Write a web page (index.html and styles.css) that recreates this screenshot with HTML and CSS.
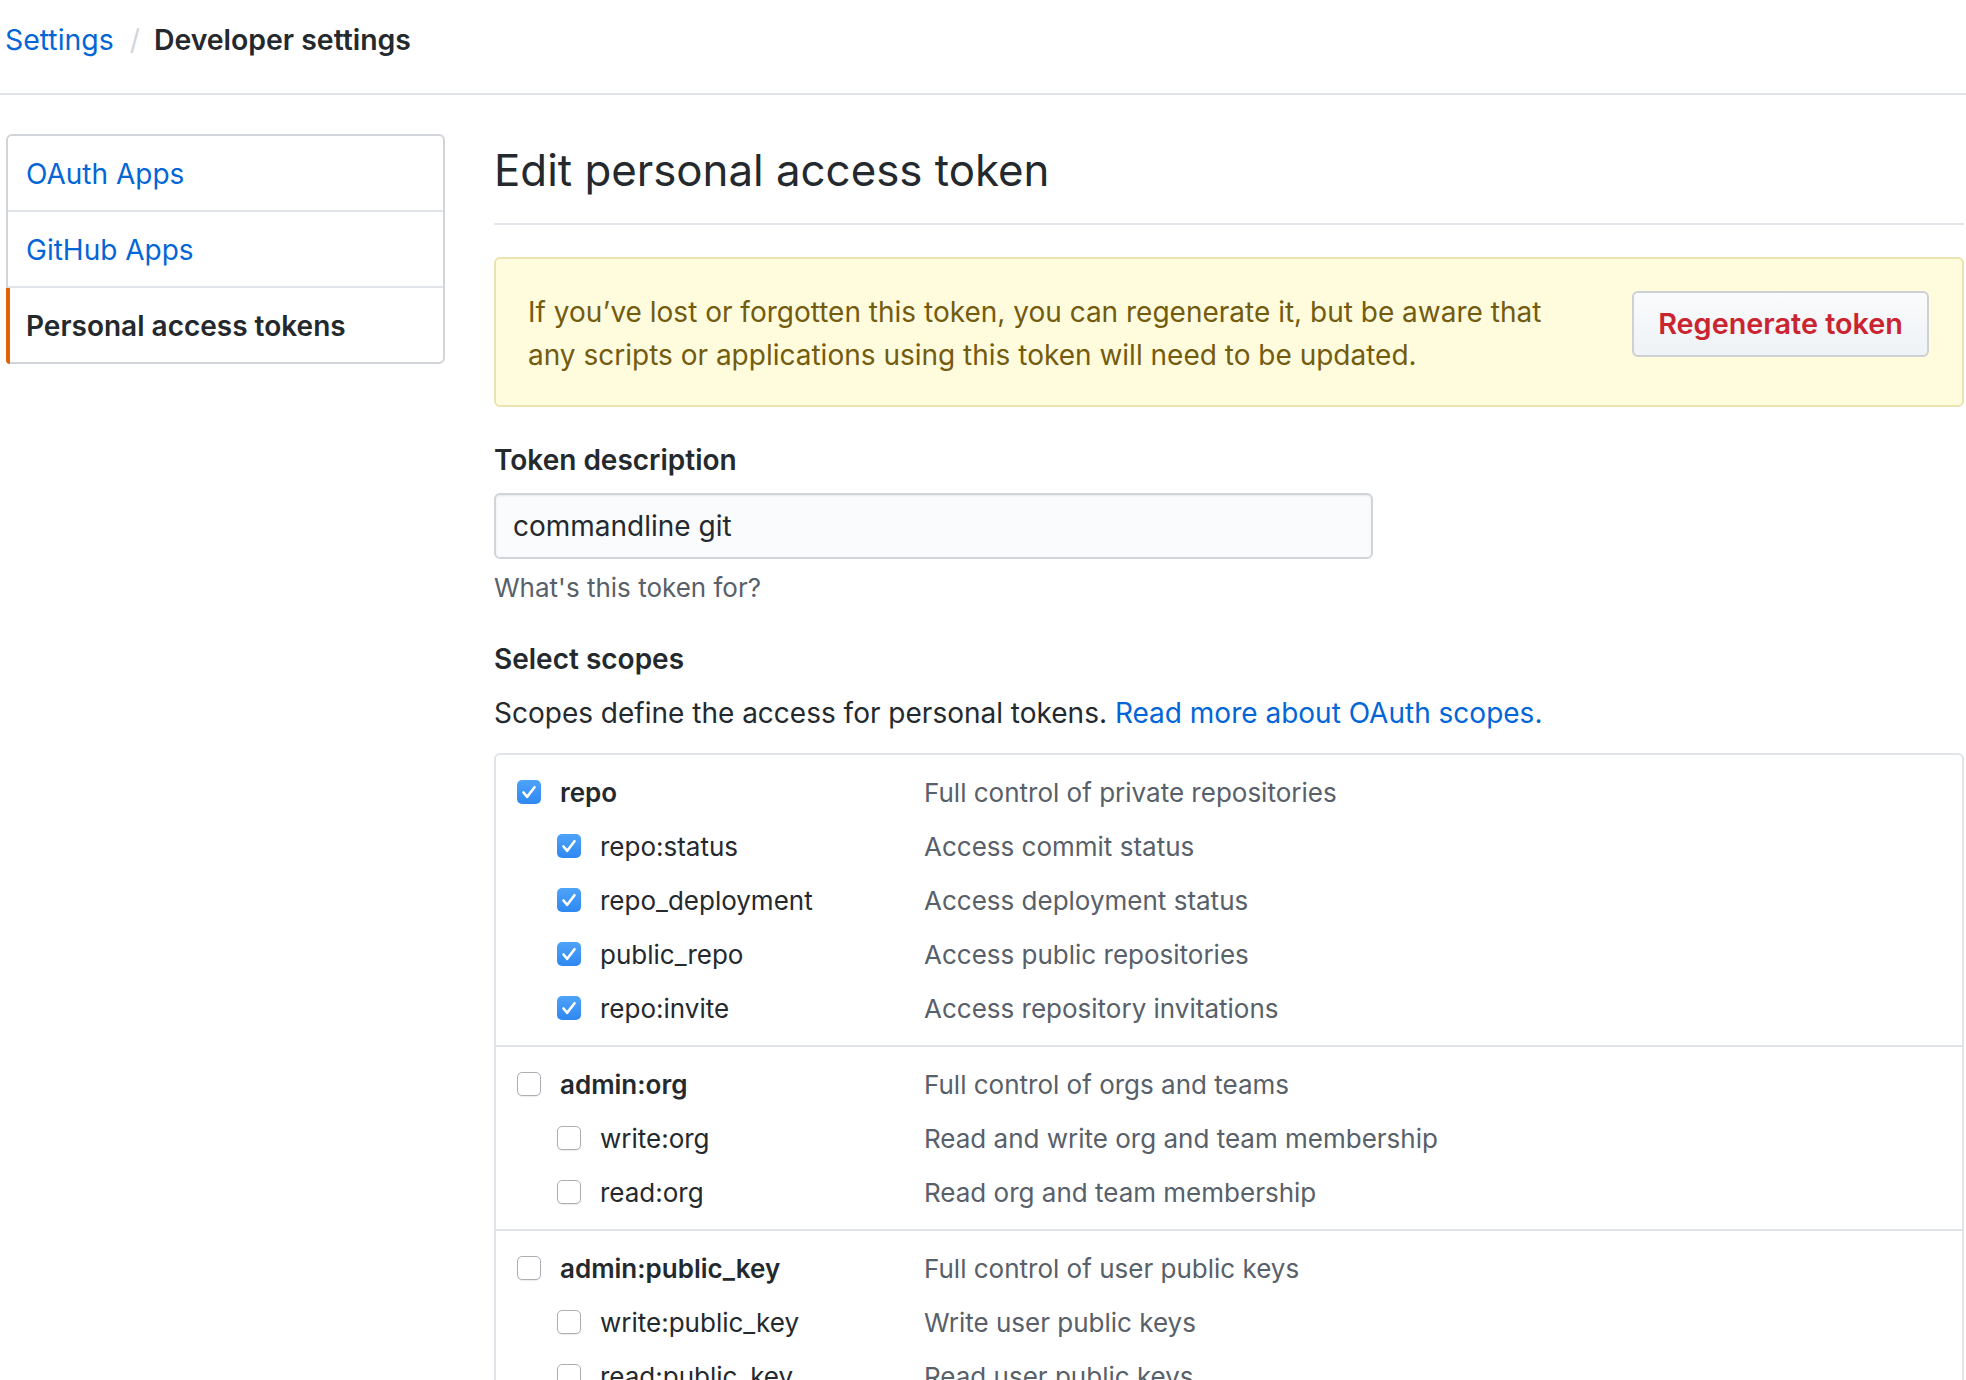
FILE: index.html
```html
<!DOCTYPE html>
<html lang="en">
<head>
<meta charset="utf-8">
<title>Edit personal access token</title>
<link rel="stylesheet" href="styles.css">
</head>
<body>
<div class="page">
  <header class="crumbs">
    <a class="crumb-link" href="#">Settings</a><span class="crumb-sep">/</span><span class="crumb-current">Developer settings</span>
  </header>

  <div class="layout">
    <nav class="menu">
      <a class="menu-item" href="#">OAuth Apps</a>
      <a class="menu-item" href="#">GitHub Apps</a>
      <a class="menu-item selected" href="#">Personal access tokens</a>
    </nav>

    <main class="main">
      <h1 class="subhead">Edit personal access token</h1>

      <div class="flash">
        <button class="btn-danger" type="button">Regenerate token</button>
        <p class="flash-text">If you’ve lost or forgotten this token, you can regenerate it, but be aware that<br>any scripts or applications using this token will need to be updated.</p>
      </div>

      <div class="form-group">
        <label class="form-label" for="desc">Token description</label>
        <input class="form-input" id="desc" type="text" value="commandline git">
        <p class="note">What's this token for?</p>
      </div>

      <h3 class="section-title">Select scopes</h3>
      <p class="section-text">Scopes define the access for personal tokens. <a class="link" href="#">Read more about OAuth scopes.</a></p>

      <div class="scopes">
        <div class="scope-group">
          <div class="scope-row parent">
            <span class="scope-name"><span class="cb checked"><svg viewBox="0 0 24 24"><polyline points="6.5,12.5 10.2,16.8 17.5,7.2"/></svg></span><b>repo</b></span>
            <span class="scope-desc">Full control of private repositories</span>
          </div>
          <div class="scope-row child">
            <span class="scope-name"><span class="cb checked"><svg viewBox="0 0 24 24"><polyline points="6.5,12.5 10.2,16.8 17.5,7.2"/></svg></span>repo:status</span>
            <span class="scope-desc">Access commit status</span>
          </div>
          <div class="scope-row child">
            <span class="scope-name"><span class="cb checked"><svg viewBox="0 0 24 24"><polyline points="6.5,12.5 10.2,16.8 17.5,7.2"/></svg></span>repo_deployment</span>
            <span class="scope-desc">Access deployment status</span>
          </div>
          <div class="scope-row child">
            <span class="scope-name"><span class="cb checked"><svg viewBox="0 0 24 24"><polyline points="6.5,12.5 10.2,16.8 17.5,7.2"/></svg></span>public_repo</span>
            <span class="scope-desc">Access public repositories</span>
          </div>
          <div class="scope-row child">
            <span class="scope-name"><span class="cb checked"><svg viewBox="0 0 24 24"><polyline points="6.5,12.5 10.2,16.8 17.5,7.2"/></svg></span>repo:invite</span>
            <span class="scope-desc">Access repository invitations</span>
          </div>
        </div>

        <div class="scope-group">
          <div class="scope-row parent">
            <span class="scope-name"><span class="cb"></span><b>admin:org</b></span>
            <span class="scope-desc">Full control of orgs and teams</span>
          </div>
          <div class="scope-row child">
            <span class="scope-name"><span class="cb"></span>write:org</span>
            <span class="scope-desc">Read and write org and team membership</span>
          </div>
          <div class="scope-row child">
            <span class="scope-name"><span class="cb"></span>read:org</span>
            <span class="scope-desc">Read org and team membership</span>
          </div>
        </div>

        <div class="scope-group">
          <div class="scope-row parent">
            <span class="scope-name"><span class="cb"></span><b>admin:public_key</b></span>
            <span class="scope-desc">Full control of user public keys</span>
          </div>
          <div class="scope-row child">
            <span class="scope-name"><span class="cb"></span>write:public_key</span>
            <span class="scope-desc">Write user public keys</span>
          </div>
          <div class="scope-row child">
            <span class="scope-name"><span class="cb"></span>read:public_key</span>
            <span class="scope-desc">Read user public keys</span>
          </div>
        </div>
      </div>
    </main>
  </div>
</div>
</body>
</html>
```

FILE: styles.css
```css
* { box-sizing: border-box; }

html, body {
  margin: 0;
  padding: 0;
  background: #ffffff;
}

body {
  font-family: Inter, "Noto Sans", "Liberation Sans", sans-serif;
  font-size: 28px;
  color: #24292e;
  overflow: hidden;
  height: 1380px;
}

a { text-decoration: none; }

.page { width: 1966px; }

/* breadcrumb header */
.crumbs {
  padding: 20px 0 33px 5px;
  font-size: 28.4px;
  line-height: 40px;
  border-bottom: 2px solid #e1e4e8;
  white-space: nowrap;
}
.crumb-link { color: #0366d6; }
.crumb-sep { color: #d1d5da; margin: 0 14px 0 16px; }
.crumb-current { font-weight: 600; color: #24292e; }

/* layout */
.layout {
  display: flex;
  align-items: flex-start;
  padding-top: 39px;
}

/* side menu */
.menu {
  width: 439px;
  margin-left: 6px;
  border: 2px solid #d1d5da;
  border-radius: 6px;
  display: flex;
  flex-direction: column;
  flex-shrink: 0;
}
.menu-item {
  position: relative;
  display: block;
  box-sizing: content-box;
  height: 74px;
  line-height: 76px;
  padding-left: 18px;
  color: #0366d6;
  border-top: 2px solid #e1e4e8;
}
.menu-item:first-child { border-top: 0; }
.menu-item.selected {
  color: #24292e;
  font-weight: 600;
}
.menu-item.selected::before {
  content: "";
  position: absolute;
  left: -2px;
  top: 0;
  bottom: -2px;
  width: 4px;
  background: #e36209;
  border-bottom-left-radius: 6px;
}

/* main */
.main {
  margin-left: 49px;
  width: 1470px;
  flex-shrink: 0;
}

.subhead {
  margin: 0;
  padding: 9px 0 24px;
  font-size: 43.8px;
  font-weight: 400;
  line-height: 56px;
  border-bottom: 2px solid #e1e4e8;
  white-space: nowrap;
}

.flash {
  margin-top: 32px;
  padding: 32px 32px 28px;
  background: #fffbdd;
  border: 2px solid #ebe2b4;
  border-radius: 6px;
  color: #735c0f;
  line-height: 43px;
}
.flash::after { content: ""; display: block; clear: both; }
.flash-text { margin: 0; white-space: nowrap; }

.btn-danger {
  float: right;
  margin-top: 0;
  margin-right: 1px;
  height: 66px;
  padding: 0 24px;
  font-family: inherit;
  font-size: 28.8px;
  font-weight: 600;
  line-height: 62px;
  color: #cb2431;
  background: linear-gradient(180deg, #fafbfc 0%, #eff3f6 90%);
  border: 2px solid #cdd0d5;
  border-radius: 6px;
  white-space: nowrap;
}

.form-group { margin-top: 32px; }
.form-label {
  display: block;
  font-weight: 600;
  line-height: 43px;
  margin-bottom: 11px;
}
.form-input {
  display: block;
  width: 879px;
  height: 66px;
  margin: 0;
  padding: 0 17px;
  font-family: inherit;
  font-size: 28px;
  color: #24292e;
  background: #fafbfc;
  border: 2px solid #d1d5da;
  border-radius: 6px;
  box-shadow: inset 0 1px 2px rgba(27, 31, 35, 0.075);
  outline: none;
}
.note {
  margin: 7px 0 0;
  font-size: 26px;
  line-height: 43px;
  color: #586069;
}

.section-title {
  margin: 29px 0 0;
  font-size: 28px;
  font-weight: 600;
  line-height: 43px;
}
.section-text {
  margin: 11px 0 0;
  line-height: 43px;
  white-space: nowrap;
}
.link { color: #0366d6; }

/* scopes table */
.scopes {
  margin-top: 18px;
  border: 2px solid #e1e4e8;
  border-radius: 6px;
  font-size: 26px;
}
.scope-group {
  padding: 10px 0;
  border-top: 2px solid #e1e4e8;
}
.scope-group:first-child { border-top: 0; }

.scope-row {
  display: flex;
  align-items: center;
  height: 54px;
  white-space: nowrap;
}
.scope-name {
  display: flex;
  align-items: center;
  width: 428px;
  flex-shrink: 0;
  gap: 19px;
}
.scope-row.parent .scope-name { padding-left: 21px; }
.scope-row.child .scope-name { padding-left: 61px; }
.scope-name b { font-weight: 600; }
.scope-desc { color: #586069; }

.cb {
  width: 24px;
  height: 24px;
  flex-shrink: 0;
  border-radius: 5px;
  background: #ffffff;
  border: 1.5px solid #abaeb3;
  box-shadow: 0 1px 1px rgba(0, 0, 0, 0.08);
  display: flex;
  align-items: center;
  justify-content: center;
}
.cb.checked {
  border: 0;
  background: linear-gradient(180deg, #4ea3f8 0%, #2f88f2 100%);
  box-shadow: none;
}
.cb svg {
  width: 24px;
  height: 24px;
  fill: none;
  stroke: #ffffff;
  stroke-width: 2.6;
  stroke-linecap: round;
  stroke-linejoin: round;
}
```
